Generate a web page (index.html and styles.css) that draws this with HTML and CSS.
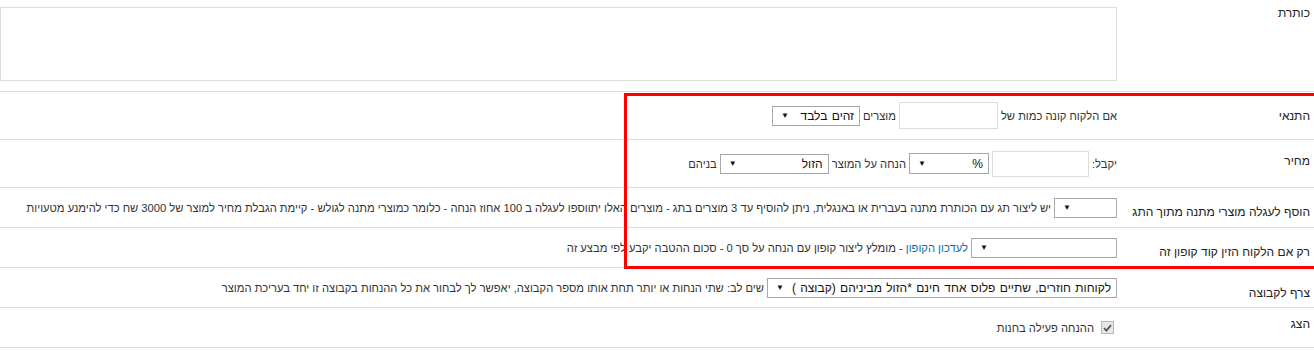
FILE: index.html
```html
<!DOCTYPE html>
<html lang="he" dir="rtl">
<head>
	<meta charset="utf-8">
	<title>עריכת הנחה</title>
	<link rel="stylesheet" href="styles.css">
</head>
<body>
	<div class="form">
		<div class="row row-title">
			<div class="label label-top">כותרת</div>
			<div class="field field-top">
				<textarea class="textarea"></textarea>
			</div>
		</div>

		<div class="row row-tall">
			<div class="label">התנאי</div>
			<div class="field">
				<span>אם הלקוח קונה כמות של</span>
				<input class="input" type="text">
				<span>מוצרים</span>
				<div class="select select-same"><span>זהים בלבד</span><span class="arrow">▼</span></div>
			</div>
		</div>

		<div class="row row-tall">
			<div class="label label-price">מחיר</div>
			<div class="field">
				<span>יקבל:</span>
				<input class="input input-price" type="text">
				<div class="select select-unit"><span>%</span><span class="arrow">▼</span></div>
				<span>הנחה על המוצר</span>
				<div class="select select-which"><span>הזול</span><span class="arrow">▼</span></div>
				<span>בניהם</span>
			</div>
		</div>

		<div class="row">
			<div class="label">הוסף לעגלה מוצרי מתנה מתוך התג</div>
			<div class="field">
				<div class="select select-tag"><span></span><span class="arrow">▼</span></div>
				<span>יש ליצור תג עם הכותרת מתנה בעברית או באנגלית, ניתן להוסיף עד 3 מוצרים בתג - מוצרים האלו יתווספו לעגלה ב 100 אחוז הנחה - כלומר כמוצרי מתנה לגולש - קיימת הגבלת מחיר למוצר של 3000 שח כדי להימנע מטעויות</span>
			</div>
		</div>

		<div class="row">
			<div class="label">רק אם הלקוח הזין קוד קופון זה</div>
			<div class="field">
				<div class="select select-coupon"><span></span><span class="arrow">▼</span></div>
				<span><a href="#" class="link">לעדכון הקופון</a> - מומלץ ליצור קופון עם הנחה על סך 0 - סכום ההטבה יקבע לפי מבצע זה</span>
			</div>
		</div>

		<div class="row">
			<div class="label label-group">צרף לקבוצה</div>
			<div class="field">
				<div class="select select-group"><span>לקוחות חוזרים, שתיים פלוס אחד חינם *הזול מביניהם (קבוצה )</span><span class="arrow">▼</span></div>
				<span>שים לב: שתי הנחות או יותר תחת אותו מספר הקבוצה, יאפשר לך לבחור את כל ההנחות בקבוצה זו יחד בעריכת המוצר</span>
			</div>
		</div>

		<div class="row">
			<div class="label label-show">הצג</div>
			<div class="field field-check">
				<span class="checkbox">
					<svg width="9" height="8" viewBox="0 0 9 8"><path d="M1 4.2 L3.4 6.6 L8 1.2" fill="none" stroke="#555" stroke-width="1.8"/></svg>
				</span>
				<span>ההנחה פעילה בחנות</span>
			</div>
		</div>

		<div class="highlight"></div>
	</div>
</body>
</html>
```

FILE: styles.css
```css
html,
body {
	margin: 0;
	padding: 0;
	overflow: hidden;
}

body {
	direction: rtl;
	background-color: #fff;
	font-family: "Liberation Sans", Arial, sans-serif;
	font-size: 11.2px;
	color: #333;
}

.form {
	position: relative;
}

.row {
	display: grid;
	grid-template-columns: 197px 1fr;
	height: 40px;
	box-sizing: border-box;
	border-bottom: 1px solid #dedede;
}

.row-tall {
	height: 48px;
}

.row-title {
	height: 92px;
}

.label {
	padding: 16px 4px 0 0;
	font-size: 12px;
	line-height: 16px;
	color: #222;
	white-space: nowrap;
}

.label-top {
	padding-top: 5px;
}

.label-price {
	padding-top: 13px;
}

.label-group {
	padding-top: 17px;
}

.label-show {
	padding-top: 8px;
}

.field {
	display: flex;
	align-items: center;
	gap: 3px;
	white-space: nowrap;
	line-height: 16px;
}

.field-top {
	align-items: flex-start;
	padding-top: 7px;
}

.field-check {
	gap: 7px;
	padding-right: 3px;
}

.textarea {
	width: 1117px;
	height: 74px;
	margin: 0;
	box-sizing: border-box;
	border: 1px solid #dddddd;
	resize: none;
	font-family: inherit;
}

.input {
	width: 99px;
	height: 27px;
	margin: 0;
	box-sizing: border-box;
	border: 1px solid #dddddd;
	font-family: inherit;
	font-size: 12px;
}

.input-price {
	width: 97px;
	height: 26px;
}

.select {
	display: flex;
	align-items: center;
	justify-content: space-between;
	height: 20px;
	padding: 0 5px 0 8px;
	box-sizing: border-box;
	border: 1px solid #a9a9a9;
	background-color: #fff;
	color: #111;
	font-size: 12px;
	word-spacing: 1px;
}

.arrow {
	font-size: 8px;
	color: #111;
}

.select-same {
	width: 88px;
}

.select-unit {
	width: 80px;
	height: 21px;
}

.select-which {
	width: 109px;
}

.select-tag {
	width: 63px;
}

.select-coupon {
	width: 146px;
}

.select-group {
	gap: 8px;
}

.link {
	color: #0073aa;
	text-decoration: none;
}

.checkbox {
	display: flex;
	align-items: center;
	justify-content: center;
	width: 13px;
	height: 13px;
	box-sizing: border-box;
	border: 1px solid #b4b9be;
	background-color: #e8e8e8;
}

/* annotation drawn over the form */
.highlight {
	position: absolute;
	top: 93px;
	left: 624px;
	width: 720px;
	height: 176px;
	box-sizing: border-box;
	border: 3px solid #ff0000;
	pointer-events: none;
}
```
